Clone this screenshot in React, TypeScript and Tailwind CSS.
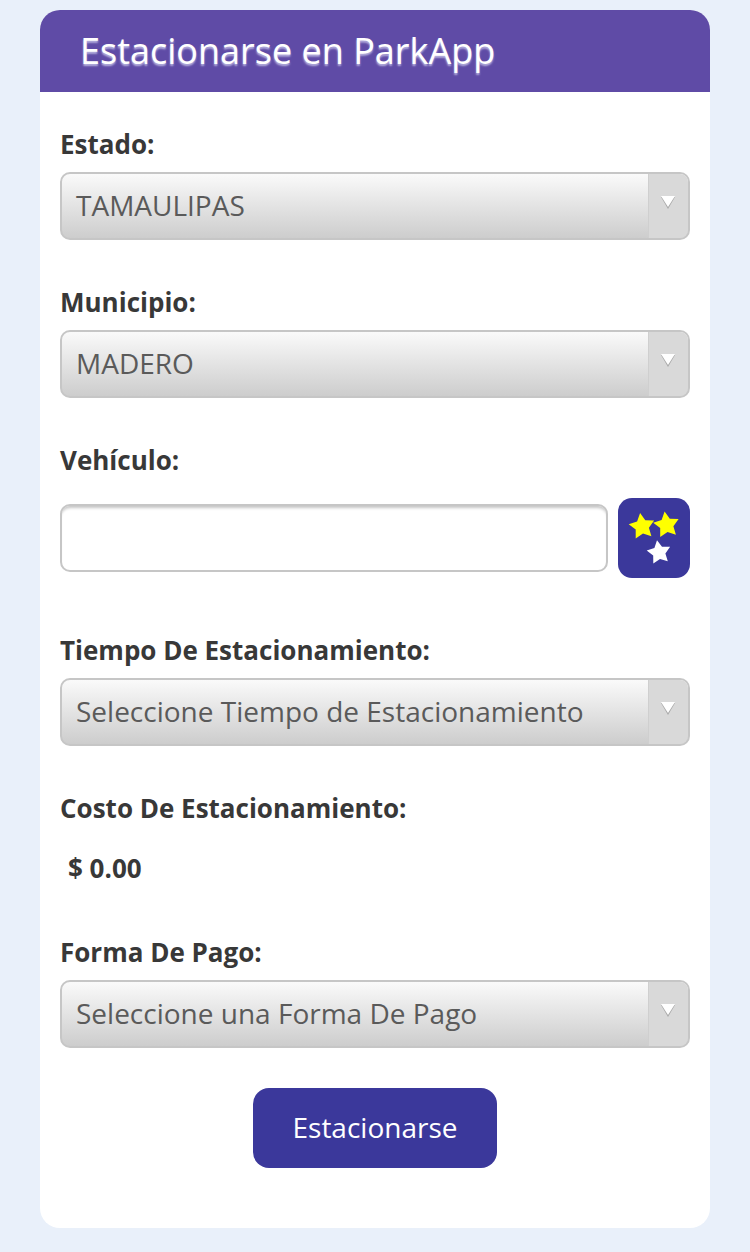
import React from "react";

const Label = ({ children }: { children: React.ReactNode }) => (
  <div className="h-9 text-[26px] leading-9 font-bold text-[#383838]">{children}</div>
);

const Select = ({ value }: { value: string }) => (
  <div className="mt-2.5 flex h-[68px] overflow-hidden rounded-[10px] border-2 border-[#c6c6c6] bg-gradient-to-b from-[#fafafa] to-[#cdcdcd]">
    <div className="flex-1 pl-3.5 text-[28px] leading-[62px] text-[#5a5a5a]">{value}</div>
    <div className="flex w-10 justify-center border-l border-[#cfcfcf] bg-[#d9d9d9] pt-[22px] pr-0.5">
      <svg width="14" height="14" viewBox="0 0 14 14">
        <path d="M0 1h14L7 13z" fill="#a8a8a8" />
        <path d="M0 0h14L7 11z" fill="#ffffff" />
      </svg>
    </div>
  </div>
);

const starPoints = (cx: number, cy: number, r: number, rot: number) =>
  Array.from({ length: 10 }, (_, i) => {
    const radius = i % 2 === 0 ? r : r * 0.52;
    const a = ((rot + i * 36 - 90) * Math.PI) / 180;
    return `${(cx + radius * Math.cos(a)).toFixed(1)},${(cy + radius * Math.sin(a)).toFixed(1)}`;
  }).join(" ");

const Stars = () => (
  <svg width="72" height="80" viewBox="0 0 72 80">
    <polygon points={starPoints(24, 28.5, 13.5, -8)} fill="#ffff00" />
    <polygon points={starPoints(48.5, 27, 13.5, -8)} fill="#ffff00" />
    <polygon points={starPoints(41, 54.5, 12.5, -9)} fill="#ffffff" />
  </svg>
);

export default function App() {
  return (
    <div className="min-h-[1252px] bg-[#e9f0fa] px-10 pt-2.5 font-['Open_Sans',sans-serif]">
      <div className="h-[1218px] overflow-hidden rounded-[20px] bg-white">
        <div className="h-[82px] bg-[#5f4ba6] pl-10 text-[36px] leading-[82px] text-white [text-shadow:0_2px_2px_#b9b4e0]">
          Estacionarse en ParkApp
        </div>
        <div className="px-5 pt-[34px]">
          <Label>Estado:</Label>
          <Select value="TAMAULIPAS" />

          <div className="mt-11">
            <Label>Municipio:</Label>
            <Select value="MADERO" />
          </div>

          <div className="mt-11">
            <Label>Vehículo:</Label>
            <div className="mt-5 flex items-center justify-between">
              <div className="h-[68px] w-[548px] rounded-[10px] border-2 border-[#c6c6c6] bg-white shadow-[inset_0_4px_3px_-2px_#c6c6c6]" />
              <div className="h-20 w-[72px] rounded-[14px] bg-[#3b389b]">
                <Stars />
              </div>
            </div>
          </div>

          <div className="mt-[54px]">
            <Label>Tiempo De Estacionamiento:</Label>
            <Select value="Seleccione Tiempo de Estacionamiento" />
          </div>

          <div className="mt-11">
            <Label>Costo De Estacionamiento:</Label>
            <div className="mt-6 h-9 pl-2 text-[26px] leading-9 font-bold text-[#383838]">$ 0.00</div>
          </div>

          <div className="mt-12">
            <Label>Forma De Pago:</Label>
            <Select value="Seleccione una Forma De Pago" />
          </div>

          <div className="mt-10 flex justify-center">
            <button className="h-20 w-[244px] rounded-[16px] bg-[#3b389b] pb-0.5 text-[28px] text-white">Estacionarse</button>
          </div>
        </div>
      </div>
    </div>
  );
}
